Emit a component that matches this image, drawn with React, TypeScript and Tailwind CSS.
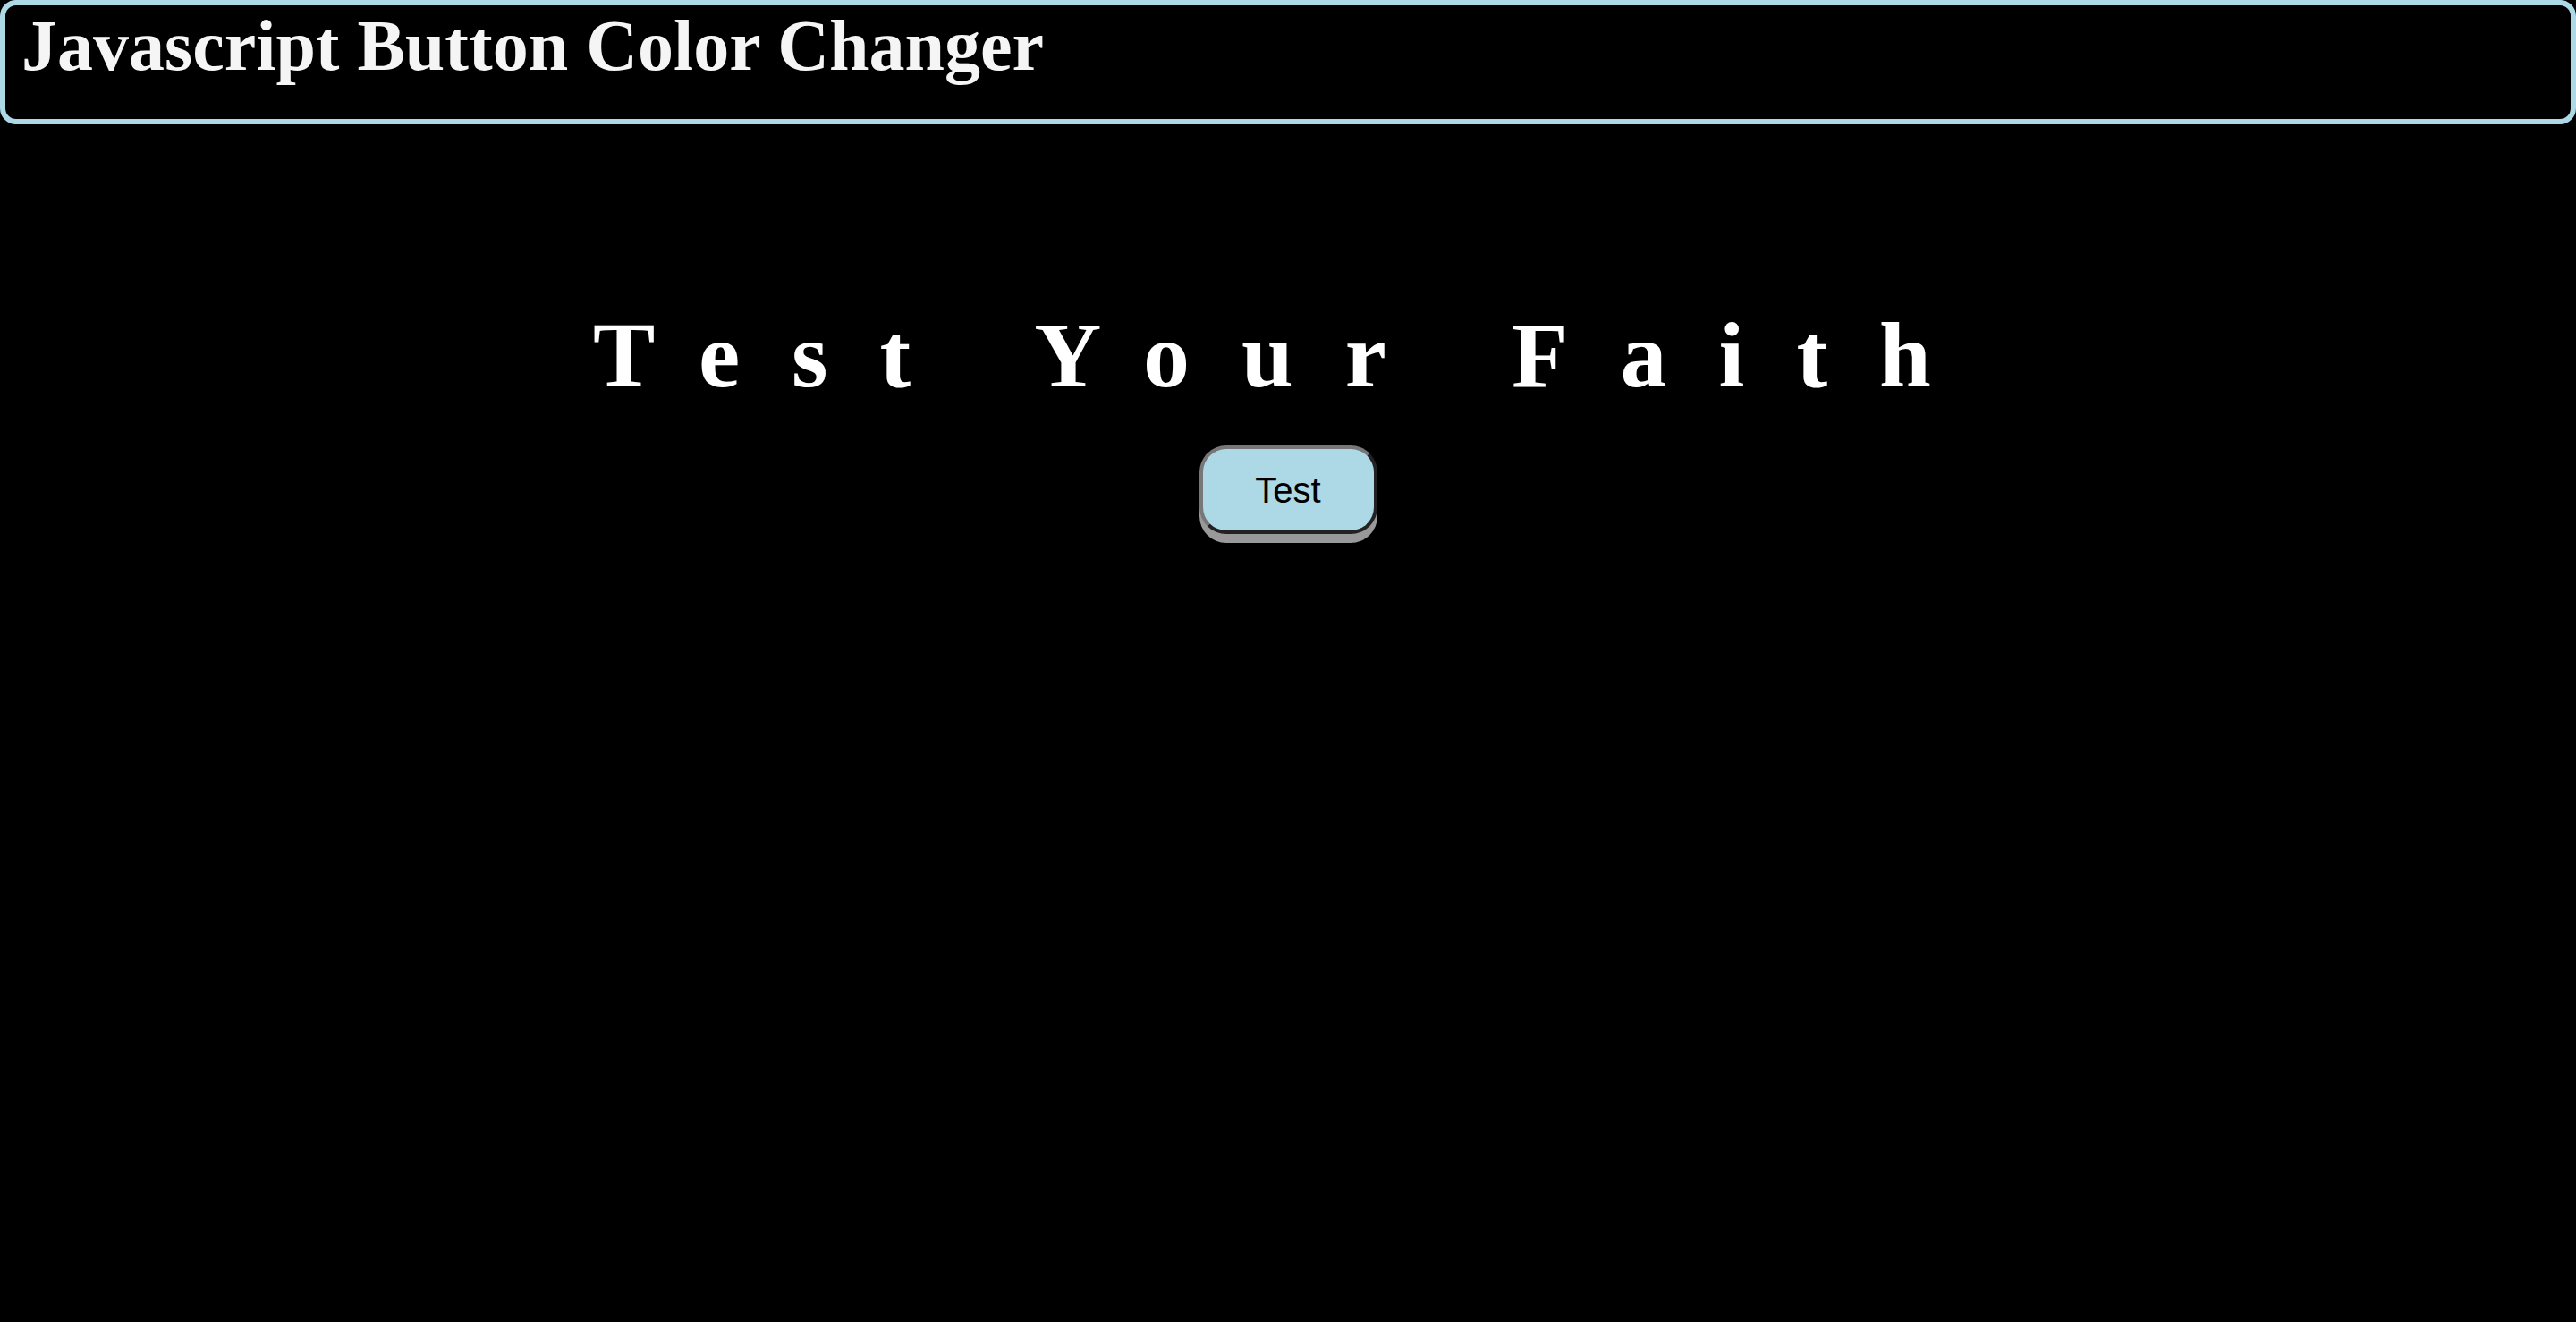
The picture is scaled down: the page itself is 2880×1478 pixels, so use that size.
export default function App() {
  return (
    <div className="min-h-screen bg-black">
      <header className="box-border w-full border-[6px] border-[#add8e6] rounded-[18px] pl-[18px] pt-px pb-[37px]">
        <h1 className="font-['Liberation_Serif',serif] font-bold text-[80px] leading-[89px] text-[#f5f5f5]">
          Javascript Button Color Changer
        </h1>
      </header>

      <main className="flex flex-col items-center pt-[200px]">
        <h2 className="font-['Liberation_Serif',serif] font-bold text-[104px] leading-[115px] tracking-[58px] text-white text-center">
          Test Your Faith
        </h2>
        <button
          type="button"
          className="mt-[44px] w-[199px] h-[99px] rounded-[30px] bg-[#add8e6] border-4 border-t-[#777] border-l-[#777] border-b-[#222] border-r-[#222] shadow-[0_10px_0_#999] font-['Liberation_Sans',sans-serif] text-[40px] leading-[46px] text-black"
        >
          Test
        </button>
      </main>
    </div>
  );
}
